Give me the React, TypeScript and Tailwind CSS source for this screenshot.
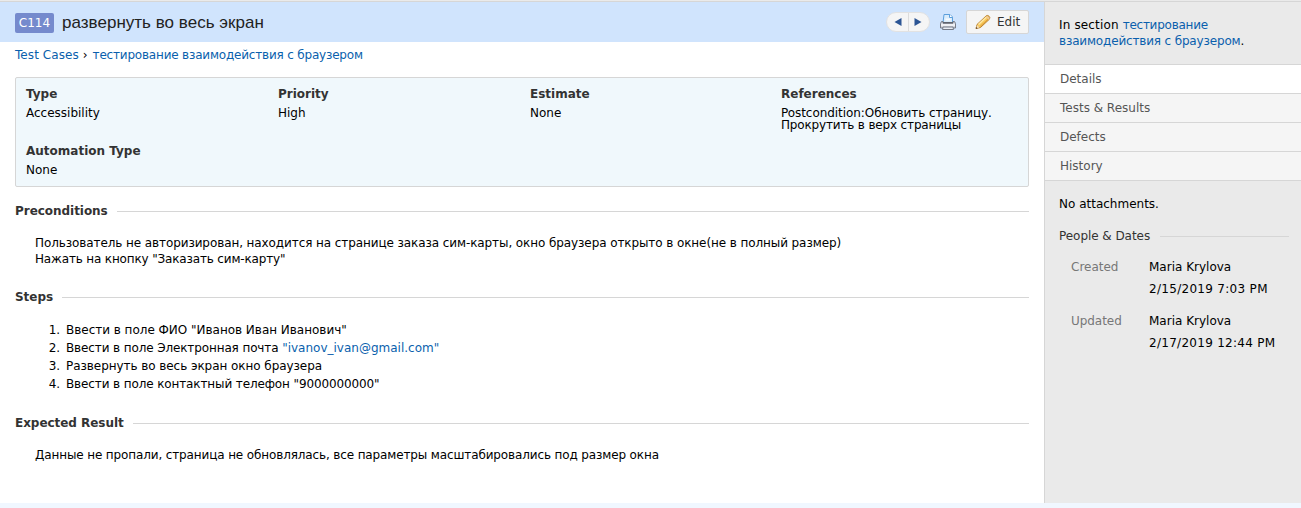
import type { ReactNode } from "react";

function Field({ label, children }: { label: string; children: ReactNode }) {
  return (
    <div>
      <div className="h-[19px] font-bold leading-[14px] text-[#333]">{label}</div>
      <div className="pt-px leading-[12px]">{children}</div>
    </div>
  );
}

function Heading({ children, className = "" }: { children: ReactNode; className?: string }) {
  return (
    <div className={`flex h-4 items-center gap-[9px] leading-4 ${className}`}>
      <h2 className="shrink-0 font-bold tracking-[-0.04px] text-[#333]">{children}</h2>
      <div className="mt-px h-px flex-1 bg-[#d6d6d6]" />
    </div>
  );
}

function Printer() {
  return (
    <svg width="16" height="16" viewBox="0 0 16 16" fill="none">
      <path d="M3 8.500L4 .5h6L12.500 3v5.500z" fill="#d9ecfc" stroke="#5c9fdc" />
      <path d="M9.500 .5v3h3" fill="#fff" stroke="#5c9fdc" />
      <path d="M5.500 5.500h5" stroke="#f6fbff" strokeWidth="2" />
      <path d="M1.500 7.500H3v1.500h10V7.500h1.500l1 2v4.500H.5V9.500z" fill="#d3d5dc" stroke="#777c88" />
      <path d="M3 8h10v1.500H3z" fill="#60646e" />
      <path d="M1 11h14" stroke="#f8f9fc" strokeWidth="1.500" />
      <path d="M3 13h10l.5 2.500h-11z" fill="#e9edf4" stroke="#747a87" />
    </svg>
  );
}

function Pencil() {
  return (
    <svg width="16" height="16" viewBox="0 0 16 16" fill="none">
      <path d="M1 14.500l1-4L11 2q1.500-1.200 3 .2t.4 3L5.500 13.500z" fill="#f8c95c" stroke="#b9802c" />
      <path d="M3.500 10.500L11.500 3" stroke="#ffe9a6" strokeWidth="1.500" />
      <path d="M5 12.500L13.200 5" stroke="#e0a03c" />
      <path d="M10.700 2.700l3 3 1-1.500-2.300-2.300z" fill="#eec898" />
      <path d="M2 11l2.500 2.500-3.300.8z" fill="#f3dfbd" />
      <path d="M.8 14.700l.4-1.700 1.300 1.300z" fill="#49331f" />
    </svg>
  );
}

const tabs = ["Details", "Tests & Results", "Defects", "History"];

export default function App() {
  return (
    <div className="flex h-[508px] w-[1301px] flex-col overflow-hidden bg-[#f0f7ff] font-['Verdana','DejaVu_Sans',sans-serif] text-[12px] text-black">
      <div className="h-[2px] shrink-0 border-b border-[#d6d6d6] bg-[#eaeaea]" />
      <div className="flex h-[501px] shrink-0">
        <main className="w-[1044px] bg-white">
          <header className="flex h-10 items-center bg-[#d0e4fd] px-[15px]">
            <span className="mt-[2px] flex h-5 w-[39px] items-center justify-center rounded-[2px] bg-[#758acd] text-white">C114</span>
            <h1 className="ml-2 mt-px font-['Liberation_Sans',sans-serif] text-[17px] tracking-[0.02px] text-[#222]">развернуть во весь экран</h1>
            <div className="ml-auto flex h-5 w-[44px] overflow-hidden rounded-full border border-[#e2e2e2] bg-[#f5f5f5]">
              <button className="flex flex-1 items-center justify-center border-r border-[#dcdcdc] pl-px">
                <svg width="8" height="8" viewBox="0 0 8 8"><path d="M7.500 0v8L.5 4z" fill="#2c5594" /></svg>
              </button>
              <button className="flex flex-1 items-center justify-center pr-px">
                <svg width="8" height="8" viewBox="0 0 8 8"><path d="M.5 0v8L7.500 4z" fill="#2c5594" /></svg>
              </button>
            </div>
            <div className="ml-[10px]"><Printer /></div>
            <button className="ml-[10px] flex h-6 w-[63px] items-center rounded-[2px] border border-[#d6d6d6] bg-[#f5f5f5] pl-2 text-[#333]">
              <Pencil />
              <span className="ml-[6px]">Edit</span>
            </button>
          </header>
          <nav className="flex h-[35px] pl-[15px] pt-[5px] leading-4">
            <a className="tracking-[0.07px] text-[#0a5fad]">Test Cases</a>
            <span className="pl-1 pr-[5px]">›</span>
            <a className="tracking-[-0.19px] text-[#0a5fad]">тестирование взаимодействия с браузером</a>
          </nav>
          <section className="ml-[15px] grid h-[110px] w-[1014px] grid-cols-[252px_252px_251px_1fr] grid-rows-[57px_1fr] rounded-[2px] border border-[#d6d6d6] bg-[#f0f8fc] pl-[10px] pt-[9px]">
            <Field label="Type">Accessibility</Field>
            <Field label="Priority">High</Field>
            <Field label="Estimate">None</Field>
            <Field label="References">
              <span className="tracking-[-0.06px]">Postcondition:Обновить страницу.</span>
              <br />
              <span className="tracking-[-0.16px]">Прокрутить в верх страницы</span>
            </Field>
            <Field label="Automation Type">None</Field>
          </section>
          <div className="px-[15px]">
            <Heading className="mt-4">Preconditions</Heading>
            <p className="mt-4 pl-5 leading-4">
              <span className="tracking-[-0.092px]">Пользователь не авторизирован, находится на странице заказа сим-карты, окно браузера открыто в окне(не в полный размер)</span>
              <br />
              <span className="tracking-[-0.16px]">Нажать на кнопку "Заказать сим-карту"</span>
            </p>
            <Heading className="mt-[22px]">Steps</Heading>
            <ol className="mt-4 list-decimal pl-[49px] leading-[18px]">
              <li className="pl-[2px]"><span className="tracking-[-0.02px]">Ввести в поле ФИО "Иванов Иван Иванович"</span></li>
              <li className="pl-[2px]"><span className="tracking-[-0.12px]">Ввести в поле Электронная почта </span><a className="text-[#0a5fad]">"ivanov_ivan@gmail.com"</a></li>
              <li className="pl-[2px]"><span className="tracking-[-0.06px]">Развернуть во весь экран окно браузера</span></li>
              <li className="pl-[2px]"><span className="tracking-[-0.12px]">Ввести в поле контактный телефон "9000000000"</span></li>
            </ol>
            <Heading className="mt-[22px]">Expected Result</Heading>
            <p className="mt-4 pl-5 leading-4 tracking-[-0.13px]">Данные не пропали, страница не обновлялась, все параметры масштабировались под размер окна</p>
          </div>
        </main>
        <aside className="w-[257px] border-l border-[#d6d6d6] bg-[#eaeaea]">
          <p className="h-[62px] pl-[14px] pt-[15px] leading-4">
            <span className="tracking-[0.15px]">In section </span>
            <a className="text-[#0a5fad]"><span className="tracking-[-0.25px]">тестирование</span><br /><span className="tracking-[-0.16px]">взаимодействия с браузером</span></a>.
          </p>
          <div className="border-b border-[#d6d6d6]">
            {tabs.map((t, i) => (
              <div key={t} className={`h-[29px] border-t border-[#d6d6d6] pl-[15px] leading-[28px] text-[#555] ${i === 0 ? "bg-white" : "bg-[#f5f5f5]"}`}>{t}</div>
            ))}
          </div>
          <p className="mt-[15px] pl-[14px] leading-4">No attachments.</p>
          <div className="mt-4 flex items-center gap-[10px] pl-[14px] pr-3 leading-4 text-[#333]">
            <span className="tracking-[-0.05px]">People &amp; Dates</span>
            <div className="mt-px h-px flex-1 bg-[#d6d6d6]" />
          </div>
          <dl className="mt-3 grid grid-cols-[78px_1fr] gap-y-[10px] pl-[26px] leading-[22px]">
            <dt className="text-[#777]">Created</dt>
            <dd>Maria Krylova<br /><span className="tracking-[0.3px]">2/15/2019 7:03 PM</span></dd>
            <dt className="tracking-[-0.05px] text-[#777]">Updated</dt>
            <dd>Maria Krylova<br /><span className="tracking-[0.28px]">2/17/2019 12:44 PM</span></dd>
          </dl>
        </aside>
      </div>
    </div>
  );
}
